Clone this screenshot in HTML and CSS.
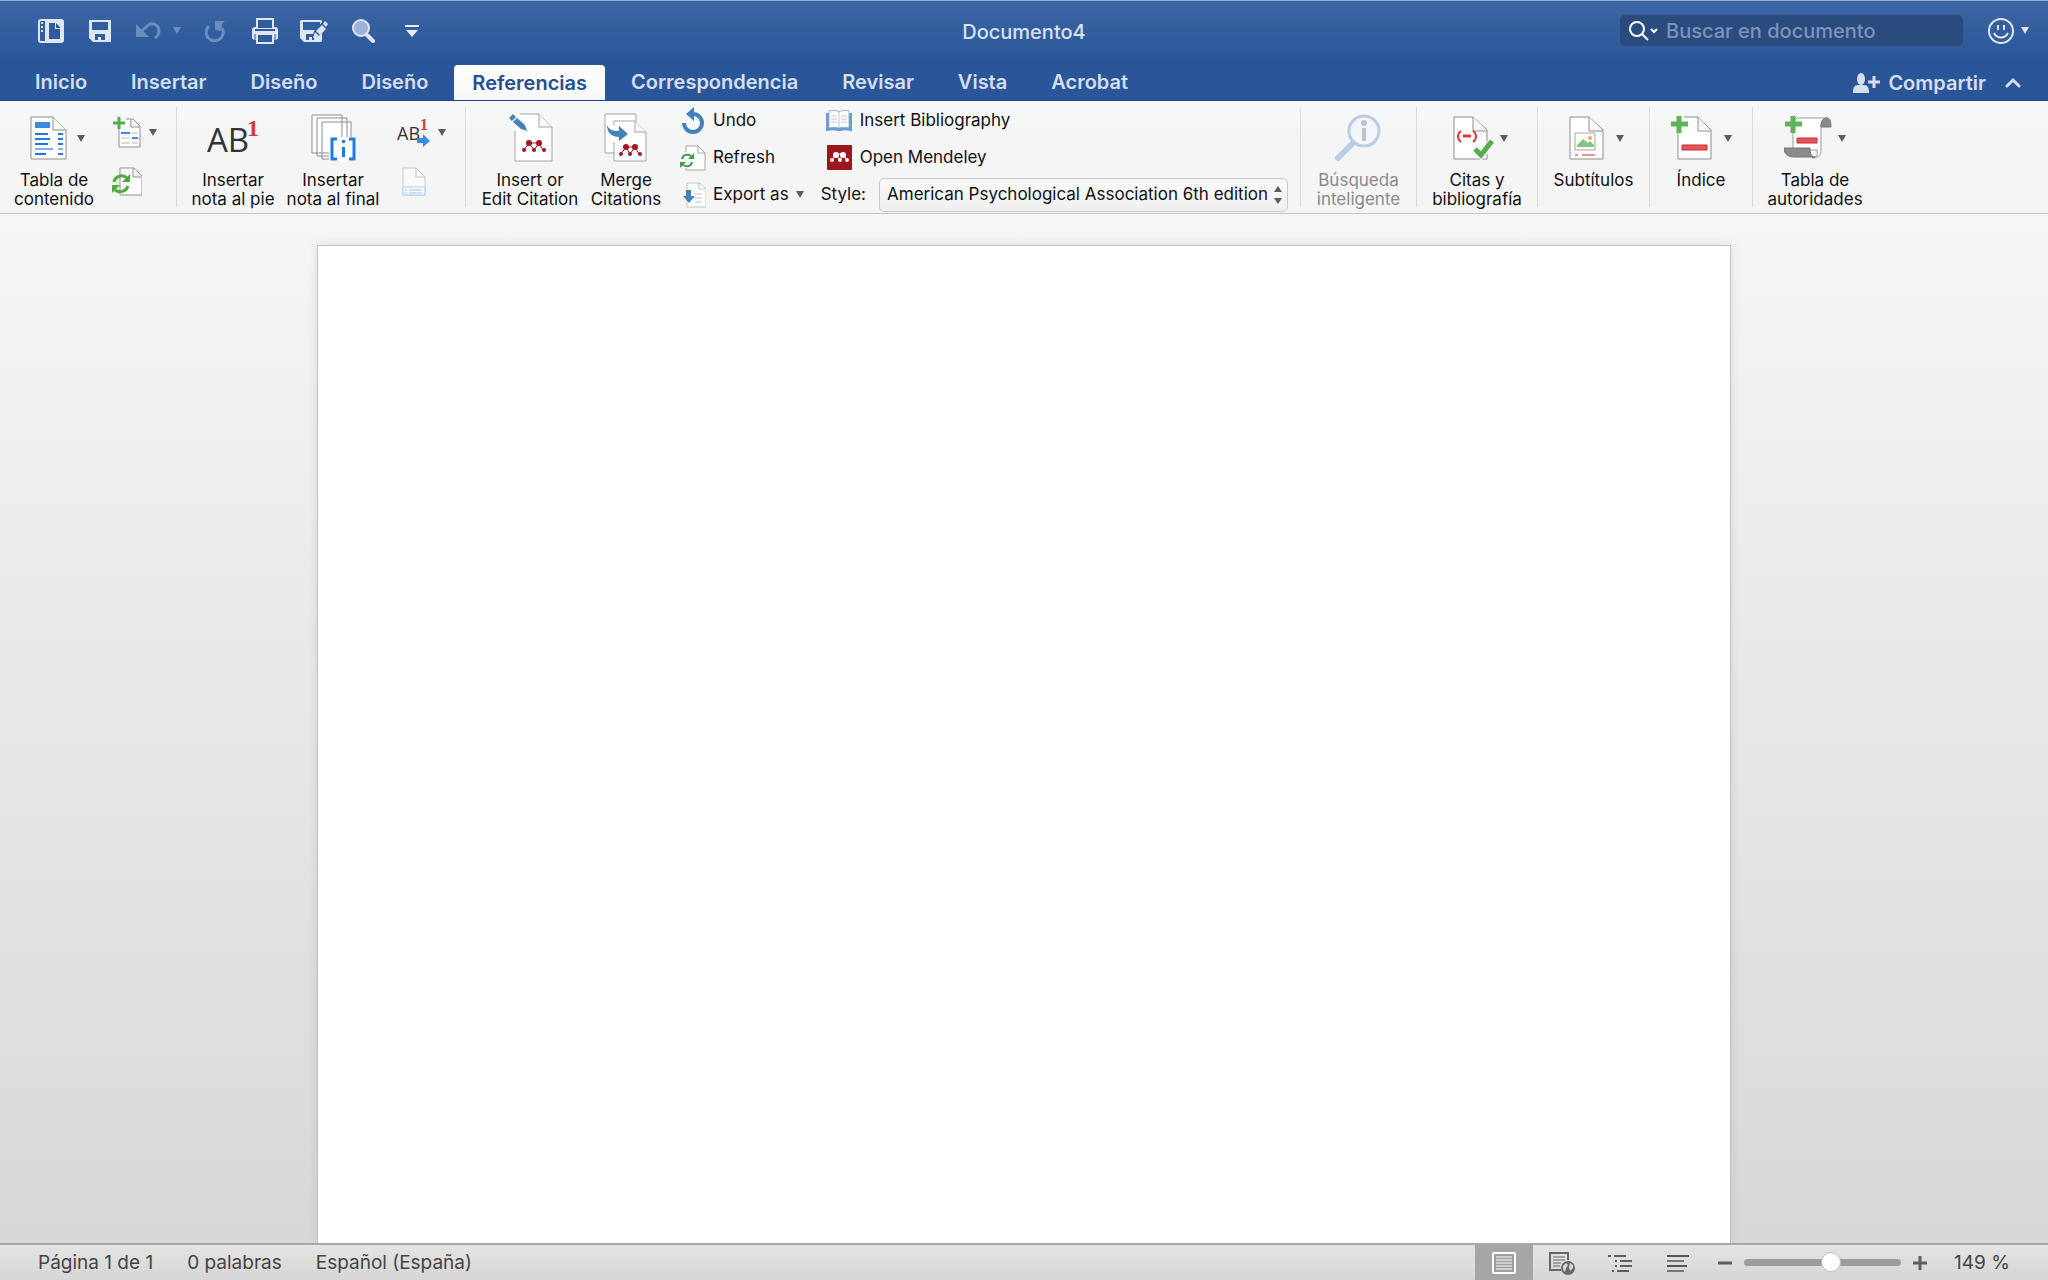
FILE: index.html
```html
<!DOCTYPE html>
<html lang="es">
<head>
	<meta charset="utf-8">
	<title>Documento4</title>
	<link rel="stylesheet" href="styles.css">
</head>
<body>
	<header class="header">
		<div class="titlebar">
			<div class="quick">
				<button class="q-btn" aria-label="Panel">
					<svg width="26" height="24" viewBox="0 0 26 24"><rect x="1" y="1" width="24" height="22" rx="2" fill="none" stroke="#dfe6f3" stroke-width="2"/><path d="M7 1h2v22H7z" fill="#dfe6f3"/><path d="M3 4h2M3 8h2M3 12h2" stroke="#dfe6f3" stroke-width="2"/><path d="M9 1h16v22H9z" fill="#dfe6f3"/><path d="M11 4h6v6h5v10H11z" fill="#2f5b9e"/><path d="M18 4l4 4v1h-4z" fill="#2f5b9e"/></svg>
				</button>
				<button class="q-btn" aria-label="Guardar">
					<svg width="24" height="24" viewBox="0 0 24 24"><path d="M2 1h20a1 1 0 0 1 1 1v20a1 1 0 0 1-1 1H5l-4-4V2a1 1 0 0 1 1-1z" fill="#dfe6f3"/><path d="M4 3h16v8H4zM7 15h10v6h-4v-3h-3v3H7z" fill="#325d9f"/></svg>
				</button>
				<button class="q-btn undo" aria-label="Deshacer" disabled>
					<svg width="26" height="20" viewBox="0 0 26 20"><path d="M1 3v13h13z" fill="#6c8cbe"/><path d="M6 11l6-6c5-5 12-1 12 5 0 3-1 5-4 7" fill="none" stroke="#6c8cbe" stroke-width="3"/></svg>
					<svg width="8" height="7" viewBox="0 0 8 7"><path d="M0 0h8L4 7z" fill="#6c8cbe"/></svg>
				</button>
				<button class="q-btn" aria-label="Repetir" disabled>
					<svg width="22" height="24" viewBox="0 0 22 24"><path d="M4 7a8.500 8.500 0 1 0 13 2" fill="none" stroke="#6c8cbe" stroke-width="3"/><path d="M10 2h10l-3 3-1 7-6-1z" fill="#6c8cbe"/></svg>
				</button>
				<button class="q-btn" aria-label="Imprimir">
					<svg width="28" height="28" viewBox="0 0 28 28"><rect x="1" y="10" width="26" height="13" rx="3" fill="#dfe6f3"/><path d="M6 2h16v10H6zM6 17h16v9H6z" fill="#2f5b9e" stroke="#dfe6f3" stroke-width="2"/><path d="M4 13h20" stroke="#2f5b9e" stroke-width="2"/><path d="M4 17v6M24 17v6" stroke="#2f5b9e" stroke-width="1"/></svg>
				</button>
				<button class="q-btn" aria-label="Guardar como">
					<svg width="30" height="24" viewBox="0 0 30 24"><path d="M2 1h20l1 1v20l-1 1H5l-4-4V2z" fill="#dfe6f3"/><path d="M4 3h17v8H4zM7 15h8v6h-2v-3h-3v3H7z" fill="#325d9f"/><path d="M13 19l2-7L25 1l5 5-10 11z" fill="#2f5b9e"/><path d="M14 19l2-6 4 4zM17 12l6-6 4 4-6 6zM24 5l2-3 3 3-2 3z" fill="#dfe6f3"/></svg>
				</button>
				<button class="q-btn" aria-label="Vista previa">
					<svg width="24" height="24" viewBox="0 0 24 24"><circle cx="10" cy="9" r="8" fill="#9db2d6" stroke="#dfe6f3" stroke-width="2"/><path d="M16 16l6 6" stroke="#dfe6f3" stroke-width="4" stroke-linecap="round"/></svg>
				</button>
				<button class="q-btn" aria-label="Personalizar">
					<svg width="14" height="12" viewBox="0 0 14 12"><path d="M0 0h14v2H0zM1 5h12l-6 7z" fill="#e8edf6"/></svg>
				</button>
			</div>
			<h1 class="doc-title">Documento4</h1>
			<div class="title-right">
				<label class="search">
					<svg width="30" height="20" viewBox="0 0 30 20"><circle cx="8" cy="8" r="7" fill="none" stroke="#fff" stroke-width="2"/><path d="M13 13l6 6M22 8l3 3 3-3" fill="none" stroke="#fff" stroke-width="2"/></svg>
					<input type="text" placeholder="Buscar en documento" aria-label="Buscar en documento">
				</label>
				<button class="smile" aria-label="Comentarios">
					<svg width="26" height="26" viewBox="0 0 26 26"><circle cx="13" cy="13" r="12" fill="none" stroke="#dfe6f3" stroke-width="2"/><path d="M10 7v5M16 7v5M6 15c3 6 11 6 14 0" fill="none" stroke="#dfe6f3" stroke-width="2"/></svg>
					<svg width="8" height="7" viewBox="0 0 8 7"><path d="M0 0h8L4 7z" fill="#dfe6f3"/></svg>
				</button>
			</div>
		</div>
		<div class="tabbar">
			<nav class="tabs">
				<a href="#" class="tab">Inicio</a>
				<a href="#" class="tab">Insertar</a>
				<a href="#" class="tab">Diseño</a>
				<a href="#" class="tab">Diseño</a>
				<a href="#" class="tab active">Referencias</a>
				<a href="#" class="tab">Correspondencia</a>
				<a href="#" class="tab">Revisar</a>
				<a href="#" class="tab">Vista</a>
				<a href="#" class="tab">Acrobat</a>
			</nav>
			<div class="share-box">
				<button class="share">
					<svg width="28" height="20" viewBox="0 0 28 20"><path d="M0 20c0-5 1-8 5-8h6c4 0 5 3 5 8z" fill="#d5deee"/><ellipse cx="8" cy="6" rx="4" ry="6" fill="#d5deee"/><path d="M21 3v12M15 9h12" stroke="#d5deee" stroke-width="3"/></svg>
					Compartir
				</button>
				<button class="collapse" aria-label="Contraer">
					<svg width="16" height="12" viewBox="0 0 16 12"><path d="M2 9l6-6 6 6" fill="none" stroke="#d5deee" stroke-width="3" stroke-linecap="round"/></svg>
				</button>
			</div>
		</div>
	</header>

	<div class="ribbon">
		<!-- tabla de contenido -->
		<section class="group g-toc">
			<button class="big">
				<span class="ico">
					<svg width="48" height="48" viewBox="0 0 48 48"><path d="M8 3h22l13 13v29H8z" fill="#fff" stroke="#8d8d8d"/><path d="M30 3v13h13" fill="#f6f6f6" stroke="#8d8d8d"/><path d="M12 8h15v6H12z" fill="#3b8ae6"/><path d="M12 20h13M12 25h15M12 30h13M12 40h11M35 20h5M35 25h5M35 30h5M35 40h5" stroke="#1f7be0" stroke-width="2"/><path d="M12 35h18M35 35h5" stroke="#7cb0ee" stroke-width="2"/></svg>
					<svg class="arrow" width="8" height="7" viewBox="0 0 8 7"><path d="M0 0h8L4 7z"/></svg>
				</span>
				Tabla de<br>contenido
			</button>
			<div class="small-col">
				<button class="small" aria-label="Agregar texto">
					<svg width="30" height="32" viewBox="0 0 30 32"><path d="M7 11v20h21V10l-7-7h-7" fill="#fff" stroke="#8d8d8d"/><path d="M19 3v8h9" fill="#fff" stroke="#8d8d8d"/><path d="M20 17h6M9 22h8" stroke="#b5b5b5" stroke-width="1"/><path d="M9 17h9M20 22h6" stroke="#3b8ae6" stroke-width="2"/><path d="M9 27h9M20 27h6" stroke="#b5b5b5"/><path d="M7 1v12M1 7h12" stroke="#55ad4b" stroke-width="3"/></svg>
					<svg class="arrow" width="8" height="7" viewBox="0 0 8 7"><path d="M0 0h8L4 7z"/></svg>
				</button>
				<button class="small" aria-label="Actualizar tabla">
					<svg width="30" height="32" viewBox="0 0 30 32"><path d="M8 2h14l8 8v19H8z" fill="#fff" stroke="#8d8d8d"/><path d="M21 2v9h8" fill="#f6f6f6" stroke="#8d8d8d"/><path d="M2 16c1-6 9-8 13-4M16 20c-2 6-9 7-13 4" fill="none" stroke="#4eaa3c" stroke-width="3"/><path d="M18 8v8h-8zM0 27v-8h8z" fill="#4eaa3c"/></svg>
				</button>
			</div>
		</section>

		<!-- notas al pie -->
		<section class="group g-notes">
			<button class="big foot">
				<span class="ico">
					<svg width="52" height="48" viewBox="0 0 52 48"><text x="0" y="38" class="ab">AB</text><text x="40" y="22" class="one">1</text></svg>
				</span>
				Insertar<br>nota al pie
			</button>
			<button class="big end">
				<span class="ico">
					<svg width="48" height="48" viewBox="0 0 48 48"><path d="M3 1h30v38H3zM8 4h30v38H8zM13 8h29v37H13z" fill="#fff" stroke="#8d8d8d"/><path d="M20 23h27v25H20z" fill="#fff"/><path d="M28 25h-5v20h5M40 25h5v20h-5" fill="none" stroke="#1f7be0" stroke-width="3"/><path d="M33 26h3v3h-3zM33 33h3v10h-3z" fill="#1f7be0"/></svg>
				</span>
				Insertar<br>nota al final
			</button>
			<div class="small-col next">
				<button class="small" aria-label="Siguiente nota al pie">
					<svg width="34" height="32" viewBox="0 0 34 32"><text x="0" y="24" class="ab-sm">AB</text><text x="23" y="14" class="one-sm">1</text><path d="M20 22h6v-4l7 7-7 6v-4h-6z" fill="#3b8ae6"/></svg>
					<svg class="arrow" width="8" height="7" viewBox="0 0 8 7"><path d="M0 0h8L4 7z"/></svg>
				</button>
				<button class="small" aria-label="Mostrar notas" disabled>
					<svg width="34" height="32" viewBox="0 0 34 32"><path d="M6 2h13l9 9v18H6z" fill="#f9f9f9" stroke="#c9c9c9"/><path d="M19 2v9h9" fill="none" stroke="#c9c9c9"/><path d="M6 21h22v8H6z" fill="#f6faff" stroke="#b3cdee"/><path d="M8 24h2M12 24h13M8 27h2M12 27h13" stroke="#9fc2ee"/></svg>
				</button>
			</div>
		</section>

		<!-- mendeley -->
		<section class="group g-mendeley">
			<button class="big insert">
				<span class="ico">
					<svg width="48" height="50" viewBox="0 0 48 50"><path d="M9 18v30h37V14L33 1H14" fill="#fff" stroke="#a5a5a5"/><path d="M33 1v13h13" fill="#fafafa" stroke="#a5a5a5"/><path d="M3 5l4-4 3 3-4 4zM7 9l4-4 8 7 2 6-6-2z" fill="#4581b9"/><path d="M18 37l5-7h10l4 7M23 30l5 7 5-7" fill="none" stroke="#a31621"/><g fill="#a31621"><circle cx="23" cy="30" r="3"/><circle cx="33" cy="30" r="3"/><circle cx="18" cy="37" r="2"/><circle cx="28" cy="37" r="2"/><circle cx="38" cy="37" r="2"/></g></svg>
				</span>
				Insert or<br>Edit Citation
			</button>
			<button class="big merge">
				<span class="ico">
					<svg width="48" height="50" viewBox="0 0 48 50"><path d="M3 1h31v39H3z" fill="#fff" stroke="#a5a5a5"/><path d="M12 8h21l11 11v29H12z" fill="#fff" stroke="#a5a5a5"/><path d="M33 8v11h11" fill="#fafafa" stroke="#a5a5a5"/><path d="M10 12h3v17h-3z" fill="#fff"/><path d="M5 12c2 5 6 6 12 6v-5l9 8-9 7v-4C10 24 5 20 5 12z" fill="#4581b9"/><path d="M19 41l5-7h9l4 7M24 34l4 7 5-7" fill="none" stroke="#a31621"/><g fill="#a31621"><circle cx="24" cy="34" r="3"/><circle cx="33" cy="34" r="3"/><circle cx="19" cy="41" r="2"/><circle cx="28" cy="41" r="2"/><circle cx="38" cy="41" r="2"/></g></svg>
				</span>
				Merge<br>Citations
			</button>
			<div class="rows">
				<button class="row">
					<svg width="26" height="28" viewBox="0 0 26 28"><path d="M13 7a9 9 0 1 1-9 9" fill="none" stroke="#4581b9" stroke-width="4"/><path d="M14 0v14L6 7z" fill="#4581b9"/></svg>
					Undo
				</button>
				<button class="row">
					<svg width="26" height="28" viewBox="0 0 26 28"><path d="M6 2h12l7 7v17H6z" fill="#fff" stroke="#a5a5a5"/><path d="M18 2v7h7" fill="none" stroke="#a5a5a5"/><path d="M0 8h14v16H0z" fill="#f9f9f9"/><path d="M2 15c1-5 6-5 9-3M12 18c-1 5-6 5-9 3" fill="none" stroke="#45994a" stroke-width="2"/><path d="M14 9v6H8zM0 24v-6h6z" fill="#45994a"/></svg>
					Refresh
				</button>
				<button class="row">
					<svg width="26" height="28" viewBox="0 0 26 28"><path d="M7 2h13l6 6v18H7z" fill="#fff" stroke="#c4c4c4"/><path d="M19 2v6h6M15 13h7M15 17h7M15 21h7" fill="none" stroke="#c4c4c4"/><path d="M6 9h5v6h4l-6 7-6-7h3z" fill="#4581b9"/></svg>
					Export as
					<svg class="arrow" width="8" height="7" viewBox="0 0 8 7"><path d="M0 0h8L4 7z"/></svg>
				</button>
			</div>
			<div class="rows rows-style">
				<button class="row">
					<svg width="28" height="28" viewBox="0 0 28 28"><path d="M2 6v17c4-1 8-1 11 0h2c4-1 7-1 11 0V6" fill="#6d9bd1" stroke="#6d9bd1" stroke-width="2"/><path d="M4 4c4-1 7-1 10 1 3-2 6-2 10-1v17c-4-1-7-1-10 0-3-1-6-1-10 0z" fill="#fff" stroke="#8fb2dc"/><path d="M14 5v16M6 9h6M6 12h6M6 15h6M16 9h6M16 12h6M16 15h6" stroke="#c2c8d0"/></svg>
					Insert Bibliography
				</button>
				<button class="row">
					<svg width="28" height="28" viewBox="0 0 28 28"><rect x="2" y="1" width="25" height="25" rx="1" fill="#9b161d"/><path d="M7 16l4-6h7l4 6M11 10l4 6 3-6" fill="none" stroke="#fff"/><g fill="#fff"><circle cx="11" cy="11" r="3"/><circle cx="18" cy="11" r="3"/><circle cx="7" cy="16" r="2"/><circle cx="15" cy="16" r="2"/><circle cx="22" cy="16" r="2"/></g></svg>
					Open Mendeley
				</button>
				<div class="row style-row">
					<label for="style">Style:</label>
					<div class="select">
						<select id="style">
							<option>American Psychological Association 6th edition</option>
						</select>
						<svg width="8" height="20" viewBox="0 0 8 20"><path d="M0 7l4-6 4 6zM0 13h8l-4 6z" fill="#5c5c5c"/></svg>
					</div>
				</div>
			</div>
		</section>

		<section class="group g-lookup">
			<button class="big" disabled>
				<span class="ico">
					<svg width="48" height="48" viewBox="0 0 48 48"><circle cx="30" cy="17" r="15" fill="#f3f7fb" stroke="#b9cee5" stroke-width="3"/><path d="M19 29L4 44" stroke="#b9cee5" stroke-width="6" stroke-linecap="round"/><path d="M28 14h4v13h-4z" fill="#c2c2c2"/><circle cx="30" cy="9" r="3" fill="#c2c2c2"/></svg>
				</span>
				Búsqueda<br>inteligente
			</button>
		</section>

		<section class="group g-cites">
			<button class="big">
				<span class="ico">
					<svg width="48" height="48" viewBox="0 0 48 48"><path d="M8 3h19l14 13v29H8z" fill="#fff" stroke="#8d8d8d"/><path d="M27 3v14h14" fill="#f8f8f8" stroke="#8d8d8d"/><path d="M15 17c-4 3-4 8 0 11M27 17c4 3 4 8 0 11" fill="none" stroke="#e0383c" stroke-width="2"/><path d="M17 22h8" stroke="#e0383c" stroke-width="3"/><path d="M29 36l6 5 12-14" fill="none" stroke="#f6f6f6" stroke-width="8"/><path d="M29 35l6 6 11-14" fill="none" stroke="#55ad4b" stroke-width="5"/></svg>
					<svg class="arrow" width="8" height="7" viewBox="0 0 8 7"><path d="M0 0h8L4 7z"/></svg>
				</span>
				Citas y<br>bibliografía
			</button>
		</section>

		<section class="group g-captions">
			<button class="big">
				<span class="ico">
					<svg width="48" height="48" viewBox="0 0 48 48"><path d="M8 3h19l14 13v29H8z" fill="#fff" stroke="#8d8d8d"/><path d="M27 3v14h14" fill="#f8f8f8" stroke="#8d8d8d"/><path d="M13 19h20v17H13z" fill="#fff" stroke="#a5a5a5"/><path d="M15 33v-2l6-6 5 4 2-2 4 4v2z" fill="#84c285"/><circle cx="28" cy="24" r="2" fill="#f2b233"/><path d="M13 41h3M20 41h13" stroke="#e02020" stroke-width="1"/></svg>
					<svg class="arrow" width="8" height="7" viewBox="0 0 8 7"><path d="M0 0h8L4 7z"/></svg>
				</span>
				Subtítulos
			</button>
		</section>

		<section class="group g-index">
			<button class="big">
				<span class="ico">
					<svg width="48" height="48" viewBox="0 0 48 48"><path d="M8 18v27h33V16L28 3H14" fill="#fff" stroke="#8d8d8d"/><path d="M28 3v14h13" fill="#f8f8f8" stroke="#8d8d8d"/><path d="M12 31h25v5H12z" fill="#e2575a" stroke="#cc2b2e"/><path d="M9 2v17M1 10h17" stroke="#5fb457" stroke-width="5"/></svg>
					<svg class="arrow" width="8" height="7" viewBox="0 0 8 7"><path d="M0 0h8L4 7z"/></svg>
				</span>
				Índice
			</button>
		</section>

		<section class="group g-auth">
			<button class="big">
				<span class="ico">
					<svg width="48" height="48" viewBox="0 0 48 48"><path d="M9 18v18h24c1 5-1 8-5 8 7 0 9-3 9-8V12c0-5 2-8 6-8H13L9 8z" fill="#fff" stroke="#9a9a9a"/><path d="M37 13c0-6 2-9 6-9 3 0 4 3 4 9z" fill="#8b8b8b" stroke="#777"/><path d="M0 34h26c0 5 1 9 5 9H10C4 43 0 40 0 34z" fill="#8b8b8b" stroke="#777"/><path d="M13 24h20v5H13z" fill="#e2575a" stroke="#cc2b2e"/><path d="M9 2v17M1 10h17" stroke="#5fb457" stroke-width="5"/></svg>
					<svg class="arrow" width="8" height="7" viewBox="0 0 8 7"><path d="M0 0h8L4 7z"/></svg>
				</span>
				Tabla de<br>autoridades
			</button>
		</section>
	</div>

	<main class="workspace">
		<div class="page"></div>
	</main>

	<footer class="status">
		<div class="status-left">
			<span>Página 1 de 1</span>
			<span>0 palabras</span>
			<span>Español (España)</span>
		</div>
		<div class="views">
			<button class="view on" aria-label="Diseño de impresión">
				<svg width="24" height="22" viewBox="0 0 24 22"><rect x="1" y="1" width="22" height="20" rx="1" fill="#a0a0a0" stroke="#fff" stroke-width="2"/><path d="M4 5h16M4 8h16M4 11h16M4 14h16M4 17h16" stroke="#fff"/></svg>
			</button>
			<button class="view" aria-label="Diseño web">
				<svg width="26" height="24" viewBox="0 0 26 24"><path d="M12 19H1V2h18v7" fill="none" stroke="#666" stroke-width="2"/><path d="M4 6h12M4 9h12M4 12h8M4 15h7" stroke="#666"/><circle cx="19" cy="17" r="7" fill="#666"/><path d="M14 15l3-3 2 2-2 3-1 4-2-2zM21 12l3 2v3l-3 3-1-4z" fill="#d8d8d8"/></svg>
			</button>
			<button class="view" aria-label="Esquema">
				<svg width="24" height="20" viewBox="0 0 24 20"><path d="M0 3h3M6 3h12M7 8h2M12 8h12M7 13h2M12 13h12M4 18h2M9 18h12" stroke="#5e5e5e" stroke-width="2"/></svg>
			</button>
			<button class="view" aria-label="Borrador">
				<svg width="24" height="20" viewBox="0 0 24 20"><path d="M1 3h22M1 13h20" stroke="#555" stroke-width="2"/><path d="M1 8h17M1 18h17" stroke="#777" stroke-width="2"/></svg>
			</button>
		</div>
		<div class="zoom">
			<button aria-label="Alejar"><svg width="14" height="14" viewBox="0 0 14 14"><path d="M0 7h14" stroke="#5e5e5e" stroke-width="3"/></svg></button>
			<input type="range" min="0" max="100" value="56" aria-label="Zoom">
			<button aria-label="Acercar"><svg width="14" height="14" viewBox="0 0 14 14"><path d="M0 7h14M7 0v14" stroke="#5e5e5e" stroke-width="3"/></svg></button>
			<span class="percent">149 %</span>
		</div>
	</footer>
</body>
</html>
```

FILE: styles.css
```css
* {
	box-sizing: border-box;
}
body {
	margin: 0;
	height: 100vh;
	display: flex;
	flex-direction: column;
	overflow: hidden;
	font-family: Inter, "Liberation Sans", sans-serif;
	font-size: 17px;
	color: #111;
}
button, input, select {
	font: inherit;
	color: inherit;
	border: 0;
	padding: 0;
	margin: 0;
	background: none;
}
svg {
	display: block;
	flex: none;
}

/* header */
.header {
	height: 101px;
	flex: none;
	display: flex;
	flex-direction: column;
	background: linear-gradient(#3c65a3, #2a5699 60%);
	border-top: 1px solid #93a9cd;
	border-bottom: 1px solid #1e4582;
	color: #d9e1f0;
}
.titlebar {
	display: grid;
	grid-template-columns: 1fr auto 1fr;
	align-items: center;
	height: 60px;
	padding: 0 19px;
}
.quick {
	display: flex;
	align-items: center;
	padding-left: 7px;
}
.q-btn, .smile {
	display: flex;
	align-items: center;
	justify-content: center;
}
.q-btn {
	width: 49px;
	gap: 12px;
}
.q-btn.undo {
	width: 67px;
}
.smile {
	gap: 7px;
}
.doc-title {
	margin: 0;
	padding-top: 2px;
	font-size: 20px;
	font-weight: 500;
}
.title-right {
	display: flex;
	justify-content: flex-end;
	align-items: center;
	gap: 25px;
}
.search {
	display: flex;
	align-items: center;
	gap: 7px;
	width: 343px;
	height: 31px;
	padding: 0 9px;
	border-radius: 5px;
	background: #2a4b7e;
}
.search input {
	flex: 1;
	min-width: 0;
	font-size: 20px;
	font-weight: 500;
	outline: none;
}
.search input::placeholder {
	color: #7c93ba;
	opacity: 1;
}
.tabbar {
	flex: 1;
	display: flex;
	justify-content: space-between;
	padding: 5px 27px 0 17px;
}
.tabs {
	display: flex;
	gap: 8px;
}
.tab {
	display: flex;
	align-items: center;
	height: 34px;
	padding: 0 18px;
	border-radius: 4px 4px 0 0;
	font-size: 20px;
	font-weight: 600;
	color: #d5deee;
	text-decoration: none;
}
.tab.active {
	height: 35px;
	background: linear-gradient(#fff, #f7f9f9);
	color: #24508f;
}
.share-box {
	display: flex;
	align-items: center;
	gap: 19px;
}
.share {
	display: flex;
	align-items: center;
	gap: 7px;
	font-size: 20px;
	font-weight: 600;
	color: #d5deee;
}

/* ribbon */
.ribbon {
	flex: none;
	display: flex;
	height: 113px;
	background: linear-gradient(#f7f9f9, #f5f5f5 30%);
	border-bottom: 1px solid #c6c6c6;
	line-height: 19px;
}
.group {
	flex: none;
	display: flex;
	justify-content: center;
	margin: 6px 0;
	border-right: 1px solid #dcdcdc;
}
.group:last-child {
	border-right: 0;
}
.g-toc {
	width: 177px;
	justify-content: flex-start;
}
.g-notes {
	width: 289px;
	justify-content: flex-start;
	padding-left: 8px;
}
.g-mendeley {
	width: 835px;
	justify-content: flex-start;
	padding-left: 9px;
}
.g-lookup {
	width: 116px;
}
.g-cites {
	width: 121px;
}
.g-captions {
	width: 112px;
}
.g-index {
	width: 103px;
}
.g-auth {
	width: 124px;
}
.big {
	display: flex;
	flex-direction: column;
	align-items: center;
	padding-top: 7px;
	white-space: nowrap;
	text-align: center;
}
.big:disabled {
	color: #8a8a8a;
}
.g-toc .big {
	width: 108px;
}
.foot {
	width: 96px;
}
.end {
	width: 104px;
}
.insert {
	width: 110px;
}
.merge {
	width: 82px;
}
.ico {
	display: flex;
	align-items: center;
	gap: 6px;
	height: 48px;
	margin-bottom: 9px;
}
.arrow {
	fill: #5c5c5c;
}
.small-col {
	display: flex;
	flex-direction: column;
	gap: 18px;
	padding: 9px 0 0 4px;
}
.small-col.next {
	padding-left: 12px;
}
.small {
	display: flex;
	align-items: center;
	gap: 7px;
}
.ab {
	font: 33px "Open Sans", sans-serif;
	fill: #333;
}
.one {
	font: bold 24px "Liberation Serif", serif;
	fill: #d8383b;
}
.ab-sm {
	font: 18px "Open Sans", sans-serif;
	fill: #333;
}
.one-sm {
	font: bold 16px "Liberation Serif", serif;
	fill: #d8383b;
}
.rows {
	display: flex;
	flex-direction: column;
	margin-top: -5px;
	padding-left: 9px;
}
.rows-style {
	padding-left: 17px;
}
.row {
	flex: none;
	display: flex;
	align-items: center;
	gap: 7px;
	height: 37px;
	padding-left: 4px;
	white-space: nowrap;
}
.style-row {
	padding-left: 0;
	gap: 13px;
}
.select {
	position: relative;
}
.select select {
	display: block;
	width: 409px;
	height: 34px;
	padding: 0 20px 0 7px;
	appearance: none;
	border: 1px solid #c9c9c9;
	border-radius: 5px;
	background: linear-gradient(#f9f9f9, #f0f0f0);
}
.select svg {
	position: absolute;
	right: 6px;
	top: 7px;
	pointer-events: none;
}

/* document */
.workspace {
	flex: 1;
	display: flex;
	min-height: 0;
	padding: 31px 317px 0;
	background: linear-gradient(#f6f6f6, #d8d8d8);
}
.page {
	flex: 1;
	background: #fff;
	border: 1px solid #c2c2c2;
	border-bottom: 0;
	box-shadow: 0 0 10px rgba(0, 0, 0, .1);
}

/* status bar */
.status {
	flex: none;
	display: flex;
	align-items: center;
	height: 37px;
	padding-left: 38px;
	background: linear-gradient(#e4e4e4, #d6d6d6);
	border-top: 2px solid #a8a8a8;
	font-size: 19px;
	color: #444;
}
.status-left {
	display: flex;
	gap: 34px;
	flex: 1;
}
.views {
	display: flex;
	align-self: stretch;
}
.view {
	width: 58px;
	display: flex;
	align-items: center;
	justify-content: center;
}
.view.on {
	background: #a6a6a6;
}
.zoom {
	display: flex;
	align-items: center;
	gap: 12px;
	width: 341px;
	padding-left: 11px;
}
.zoom input {
	appearance: none;
	width: 157px;
	height: 20px;
}
.zoom input::-webkit-slider-runnable-track {
	height: 7px;
	border-radius: 4px;
	background: #9c9c9c;
}
.zoom input::-webkit-slider-thumb {
	appearance: none;
	width: 20px;
	height: 20px;
	margin-top: -7px;
	border-radius: 50%;
	border: 1px solid #bdbdbd;
	background: #fff;
}
.percent {
	margin-left: 15px;
}
```
